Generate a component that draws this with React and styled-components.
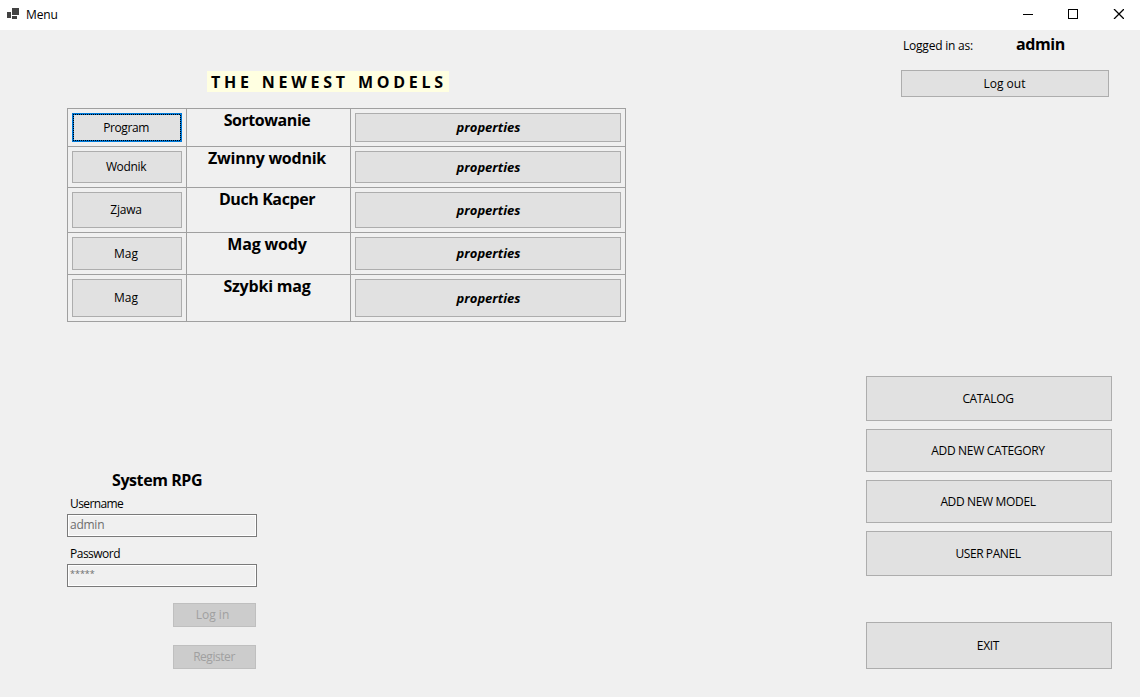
import React from 'react';
import styled, { createGlobalStyle, css } from 'styled-components';

const GlobalStyle = createGlobalStyle`
  * { box-sizing: border-box; }
  body {
    margin: 0;
    background: #f0f0f0;
    color: #000;
    font: 12px/17px "Open Sans", "Noto Sans", sans-serif;
  }
  button, input { font: inherit; color: inherit; border-radius: 0; outline: none; }
`;

const Window = styled.div`
  width: 1140px;
  height: 697px;
  overflow: hidden;
  display: flex;
  flex-direction: column;
  background: #f0f0f0;
`;

const TitleBar = styled.header`
  height: 30px;
  flex: none;
  display: flex;
  align-items: flex-start;
  background: #fff;
`;

const AppIcon = styled.svg`
  width: 12px;
  height: 11px;
  margin: 8px 7px 0 7px;
  fill: #424242;
`;

const TitleText = styled.span`
  flex: 1;
  padding-top: 6px;
  letter-spacing: -0.1px;
`;

const WindowControls = styled.div`
  display: flex;
  gap: 35px;
  padding: 9px 16px 0 0;
`;

const ControlIcon = styled.svg`
  width: ${(p) => p.$w || 10}px;
  height: 10px;
  fill: none;
  stroke: #000;
  stroke-width: ${(p) => p.$stroke || 1};
`;

const Content = styled.main`
  flex: 1;
  display: flex;
  justify-content: space-between;
  padding: 0 28px 0 67px;
`;

const LeftColumn = styled.div`
  width: 559px;
  display: flex;
  flex-direction: column;
  align-items: flex-start;
`;

const RightColumn = styled.div`
  width: 246px;
  display: flex;
  flex-direction: column;
`;

const Heading = styled.h1`
  height: 21px;
  width: 242px;
  margin: 41px 0 16px 140px;
  padding-left: 4px;
  background: #ffffe1;
  font-size: 16px;
  line-height: 22px;
  font-weight: 700;
  letter-spacing: 3.75px;
  word-spacing: 1.2px;
  white-space: nowrap;
`;

const ModelTable = styled.div`
  width: 559px;
  border-top: 1px solid #a0a0a0;
  border-left: 1px solid #a0a0a0;
`;

const ModelRow = styled.div`
  display: grid;
  grid-template-columns: 119px 164px 275px;
  height: ${(p) => p.$height}px;
  border-bottom: 1px solid #a0a0a0;
`;

const Cell = styled.div`
  display: flex;
  padding: 4px;
  border-right: 1px solid #a0a0a0;
`;

const NameCell = styled(Cell)`
  justify-content: center;
  padding: 0 3px 0 0;
  font-size: 16px;
  line-height: 22px;
  font-weight: 700;
  letter-spacing: ${(p) => p.$track}px;
  white-space: nowrap;
`;

const Button = styled.button`
  display: flex;
  align-items: center;
  justify-content: center;
  width: 100%;
  height: ${(p) => (p.$height ? `${p.$height}px` : 'auto')};
  padding: 0 1px 0 0;
  border: 1px solid #adadad;
  background: #e1e1e1;
  letter-spacing: ${(p) => p.$track || 0}px;
  white-space: nowrap;
`;

const focusRing = css`
  border-color: #0078d7;
  background:
    repeating-linear-gradient(90deg, #000 0 1px, #0078d7 1px 2px) left top / 100% 1px no-repeat,
    repeating-linear-gradient(90deg, #000 0 1px, #0078d7 1px 2px) left bottom / 100% 1px no-repeat,
    repeating-linear-gradient(180deg, #000 0 1px, #0078d7 1px 2px) left top / 1px 100% no-repeat,
    repeating-linear-gradient(180deg, #0078d7 0 1px, #000 1px 2px) right top / 1px 100% no-repeat,
    #e1e1e1;
`;

const CategoryButton = styled(Button)`
  padding: 0 2px ${(p) => p.$lift || 0}px 0;
  ${(p) => p.$focused && focusRing}
`;

const PropertiesButton = styled(Button)`
  padding: 0 0 0 1px;
  font-size: 13px;
  font-weight: 700;
  font-style: italic;
`;

const LoginForm = styled.form`
  width: 190px;
  margin-top: 147px;
  display: flex;
  flex-direction: column;
`;

const FormTitle = styled.h2`
  margin: 0 0 4px 45px;
  font-size: 16px;
  line-height: 22px;
  font-weight: 700;
  letter-spacing: -0.42px;
`;

const FieldLabel = styled.label`
  margin: 0 0 2px 3px;
  letter-spacing: ${(p) => p.$track}px;
`;

const Field = styled.div`
  height: 23px;
  margin-bottom: ${(p) => p.$after}px;
  padding: 0 2px;
  border: 1px solid #7a7a7a;
  box-shadow: inset 0 0 0 1px #fff;
  color: #6d6d6d;
  font-size: ${(p) => (p.$masked ? 9 : 12)}px;
  line-height: ${(p) => (p.$masked ? 18 : 19)}px;
  letter-spacing: ${(p) => (p.$masked ? 0 : -0.25)}px;
`;

const DisabledButton = styled(Button)`
  align-self: flex-end;
  width: 83px;
  height: 24px;
  margin: 0 1px 18px 0;
  padding: 0 ${(p) => p.$shift}px 1px 0;
  border-color: #bfbfbf;
  background: #ccc;
  color: #a0a0a0;
`;

const Account = styled.section`
  width: 208px;
  margin: 3px 0 279px 35px;
`;

const AccountRow = styled.div`
  display: flex;
  align-items: flex-start;
  height: 37px;
  padding-left: 2px;
`;

const AccountLabel = styled.span`
  width: 113px;
  padding-top: 4px;
  letter-spacing: -0.22px;
`;

const AccountName = styled.strong`
  font-size: 16px;
  line-height: 22px;
  letter-spacing: -0.4px;
`;

const Nav = styled.nav`
  display: flex;
  flex-direction: column;
  gap: 8px;
  margin-bottom: 46px;
`;

const NavButton = styled(Button)`
  padding-right: 2px;
`;

const MODELS = [
  { category: 'Program', track: -0.4, name: 'Sortowanie', nameTrack: -0.43, height: 38 },
  { category: 'Wodnik', track: -0.35, lift: 1, name: 'Zwinny wodnik', nameTrack: -0.25, height: 41 },
  { category: 'Zjawa', track: -0.25, lift: 1, name: 'Duch Kacper', nameTrack: -0.4, height: 45 },
  { category: 'Mag', track: 0, name: 'Mag wody', nameTrack: -0.15, height: 42 },
  { category: 'Mag', track: 0, lift: 1, name: 'Szybki mag', nameTrack: -0.2, height: 47 },
];

const NAV_ITEMS = [
  { label: 'CATALOG', track: -0.35, height: 45 },
  { label: 'ADD NEW CATEGORY', track: -0.32, height: 43 },
  { label: 'ADD NEW MODEL', track: -0.35, height: 43 },
  { label: 'USER PANEL', track: -0.42, height: 45 },
];

export default function App() {
  return (
    <Window>
      <GlobalStyle />
      <TitleBar>
        <AppIcon viewBox="0 0 12 11" shapeRendering="crispEdges">
          <rect x="5" y="0" width="7" height="7" />
          <rect x="0" y="4" width="4" height="6" />
          <rect x="5" y="8" width="5" height="3" />
        </AppIcon>
        <TitleText>Menu</TitleText>
        <WindowControls>
          <ControlIcon viewBox="0 0 10 10"><path d="M0 5.5H10" /></ControlIcon>
          <ControlIcon viewBox="0 0 10 10"><rect x="0.5" y="0.5" width="9" height="9" /></ControlIcon>
          <ControlIcon $w={11} $stroke={1.3} viewBox="0 0 11 10"><path d="M1 0L11 10M11 0L1 10" /></ControlIcon>
        </WindowControls>
      </TitleBar>
      <Content>
        <LeftColumn>
          <Heading>THE NEWEST MODELS</Heading>
          <ModelTable>
            {MODELS.map((m, i) => (
              <ModelRow key={m.name} $height={m.height}>
                <Cell><CategoryButton $track={m.track} $lift={m.lift} $focused={i === 0}>{m.category}</CategoryButton></Cell>
                <NameCell $track={m.nameTrack}>{m.name}</NameCell>
                <Cell><PropertiesButton>properties</PropertiesButton></Cell>
              </ModelRow>
            ))}
          </ModelTable>
          <LoginForm onSubmit={(e) => e.preventDefault()}>
            <FormTitle>System RPG</FormTitle>
            <FieldLabel $track={-0.6}>Username</FieldLabel>
            <Field $after={8}>admin</Field>
            <FieldLabel $track={-0.5}>Password</FieldLabel>
            <Field $after={16} $masked>*****</Field>
            <DisabledButton disabled $shift={4}>Log in</DisabledButton>
            <DisabledButton disabled $shift={1} $track={-0.45}>Register</DisabledButton>
          </LoginForm>
        </LeftColumn>
        <RightColumn>
          <Account>
            <AccountRow>
              <AccountLabel>Logged in as:</AccountLabel>
              <AccountName>admin</AccountName>
            </AccountRow>
            <Button $height={27}>Log out</Button>
          </Account>
          <Nav>
            {NAV_ITEMS.map((n) => (
              <NavButton key={n.label} $height={n.height} $track={n.track}>{n.label}</NavButton>
            ))}
          </Nav>
          <NavButton $height={47} $track={-0.3}>EXIT</NavButton>
        </RightColumn>
      </Content>
    </Window>
  );
}
